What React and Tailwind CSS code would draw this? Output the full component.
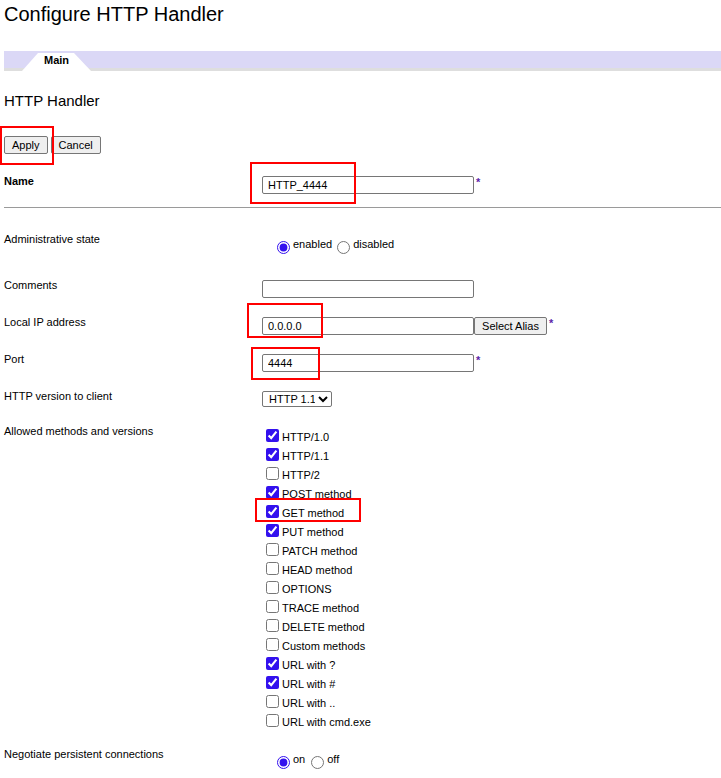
import { useState } from 'react'

const methods = [
  ['HTTP/1.0', true],
  ['HTTP/1.1', true],
  ['HTTP/2', false],
  ['POST method', true],
  ['GET method', true],
  ['PUT method', true],
  ['PATCH method', false],
  ['HEAD method', false],
  ['OPTIONS', false],
  ['TRACE method', false],
  ['DELETE method', false],
  ['Custom methods', false],
  ['URL with ?', true],
  ['URL with #', true],
  ['URL with ..', false],
  ['URL with cmd.exe', false],
]

const inputCls = "w-[212px] h-[18px] pl-[5px] pr-[2px] border border-[#767676] rounded-[2px] bg-white text-[11px] leading-[14px] outline-none"
const btnCls = "h-[18px] px-[7px] border border-[#767676] rounded-[2px] bg-[#efefef] text-[11px] leading-[14px] whitespace-nowrap"

const Star = () => (
  <span className="ml-[2px] mt-[2px] text-[11px] font-bold leading-[13px] text-[#5b1fa8]">*</span>
)

const Row = ({ label, bold, height, children }) => (
  <div className="flex items-start" style={{ height }}>
    <div className={"w-[262px] shrink-0 pl-1 pt-[1px] text-[11px] leading-[13px] " + (bold ? "font-bold" : "")}>{label}</div>
    <div className="flex items-start">{children}</div>
  </div>
)

const App = () => {
  const [checked, setChecked] = useState(methods.map(m => m[1]));
  const [admin, setAdmin] = useState("enabled");
  const [persist, setPersist] = useState("on");

  const toggle = (i) => {
    const next = [...checked];
    next[i] = !next[i];
    setChecked(next);
  }

  return (
    <div className="relative w-[721px] min-h-[778px] bg-white text-black font-['Liberation_Sans',Arial,sans-serif]">
      <h1 className="pt-[3px] pl-1 text-[20px] leading-[23px] font-normal">Configure HTTP Handler</h1>

      {/* tab bar */}
      <div className="mt-[25px] ml-1 h-[20px] flex items-start bg-[#dbd8f6] border-b-[3px] border-[#dedede]">
        <div className="ml-[18px] w-[69px] h-[20px] bg-white pt-[3px] text-center text-[11px] font-bold leading-[13px] [clip-path:polygon(16px_2px,52px_2px,69px_100%,0_100%)]">
          Main
        </div>
      </div>

      <h2 className="mt-[21px] pl-1 text-[15px] leading-[17px] font-normal">HTTP Handler</h2>

      <div className="mt-[27px] pl-1 flex gap-[3px]">
        <button className={btnCls}>Apply</button>
        <button className={btnCls}>Cancel</button>
      </div>

      <div className="mt-[20px]">
        <Row label="Name" bold height={20}>
          <input className={inputCls + " mt-[2px]"} defaultValue="HTTP_4444" />
          <Star />
        </Row>
      </div>

      <div className="mt-[13px] ml-1 h-px bg-[#9a9a9a]" />

      <div className="mt-[24px]">
        <Row label="Administrative state" height={46}>
          <label className="flex items-start ml-[15px]">
            <input type="radio" name="admin" className="m-0 mt-[9px] w-[13px] h-[13px] accent-[#3311ee]"
              checked={admin === "enabled"} onChange={() => setAdmin("enabled")} />
            <span className="ml-[3px] mt-[6px] text-[11px] leading-[13px]">enabled</span>
          </label>
          <label className="flex items-start ml-[5px]">
            <input type="radio" name="admin" className="m-0 mt-[9px] w-[13px] h-[13px] accent-[#3311ee]"
              checked={admin === "disabled"} onChange={() => setAdmin("disabled")} />
            <span className="ml-[3px] mt-[6px] text-[11px] leading-[13px]">disabled</span>
          </label>
        </Row>

        <Row label="Comments" height={37}>
          <input className={inputCls + " mt-[2px]"} />
        </Row>

        <Row label="Local IP address" height={37}>
          <input className={inputCls + " mt-[2px]"} defaultValue="0.0.0.0" />
          <button className={btnCls + " mt-[2px] w-[73px] px-0"}>Select Alias</button>
          <Star />
        </Row>

        <Row label="Port" height={37}>
          <input className={inputCls + " mt-[2px]"} defaultValue="4444" />
          <Star />
        </Row>

        <Row label="HTTP version to client" height={35}>
          <select className="mt-[2px] w-[70px] h-[16px] pl-[2px] border border-[#767676] rounded-[2px] bg-white text-[11px] leading-[13px]" defaultValue="1.1">
            <option value="1.0">HTTP 1.0</option>
            <option value="1.1">HTTP 1.1</option>
            <option value="2">HTTP 2</option>
          </select>
        </Row>

        <Row label="Allowed methods and versions" height={323}>
          <div className="mt-[5px] flex flex-col">
            {methods.map((m, i) => (
              <label key={m[0]} className="flex items-start h-[19px]">
                <input type="checkbox" className="m-0 ml-[4px] w-[13px] h-[13px] accent-[#3311ee]"
                  checked={checked[i]} onChange={() => toggle(i)} />
                <span className="ml-[3px] mt-[2px] text-[11px] leading-[13px]">{m[0]}</span>
              </label>
            ))}
          </div>
        </Row>

        <Row label="Negotiate persistent connections" height={31}>
          <label className="flex items-start ml-[15px]">
            <input type="radio" name="persist" className="m-0 mt-[9px] w-[13px] h-[13px] accent-[#3311ee]"
              checked={persist === "on"} onChange={() => setPersist("on")} />
            <span className="ml-[3px] mt-[6px] text-[11px] leading-[13px]">on</span>
          </label>
          <label className="flex items-start ml-[6px]">
            <input type="radio" name="persist" className="m-0 mt-[9px] w-[13px] h-[13px] accent-[#3311ee]"
              checked={persist === "off"} onChange={() => setPersist("off")} />
            <span className="ml-[3px] mt-[6px] text-[11px] leading-[13px]">off</span>
          </label>
        </Row>
      </div>

      {/* red highlight boxes */}
      <div className="absolute left-[0px] top-[126px] w-[54px] h-[39px] border-2 border-[#f00] pointer-events-none" />
      <div className="absolute left-[250px] top-[162px] w-[106px] h-[42px] border-2 border-[#f00] pointer-events-none" />
      <div className="absolute left-[247px] top-[303px] w-[76px] h-[35px] border-2 border-[#f00] pointer-events-none" />
      <div className="absolute left-[251px] top-[347px] w-[69px] h-[33px] border-2 border-[#f00] pointer-events-none" />
      <div className="absolute left-[255px] top-[498px] w-[106px] h-[24px] border-2 border-[#f00] pointer-events-none" />
    </div>
  )
}

export default App
